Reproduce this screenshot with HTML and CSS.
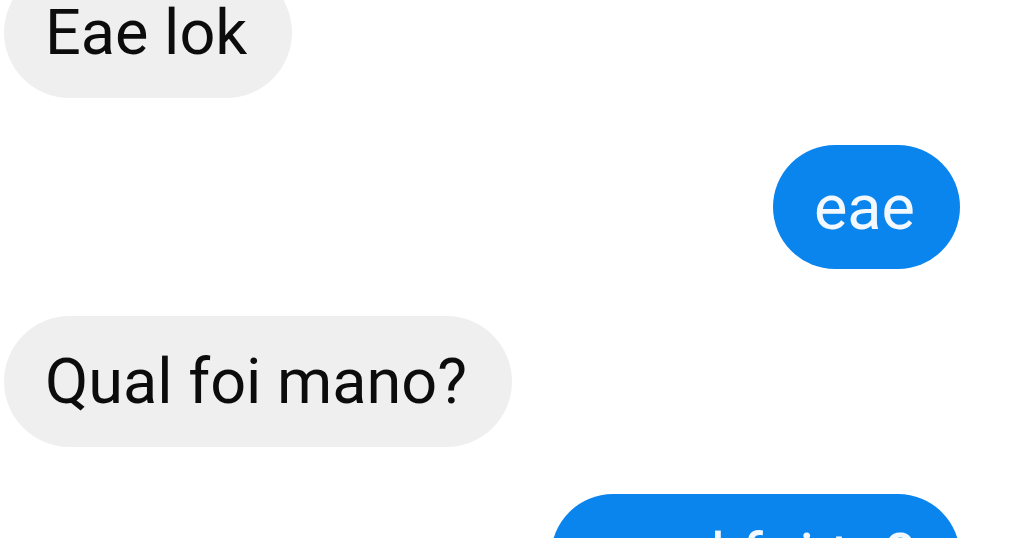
FILE: index.html
```html
<!DOCTYPE html>
<html lang="pt">
<head>
<meta charset="utf-8">
<link rel="stylesheet" href="styles.css">
<title>Chat</title>
</head>
<body>
<div class="chat">
  <div class="msg in">Eae lok</div>
  <div class="msg out">eae</div>
  <div class="msg in">Qual foi mano?</div>
  <div class="msg out last">qual foi tu?</div>
</div>
</body>
</html>
```
FILE: styles.css
```css
html, body {
  margin: 0;
  padding: 0;
  background: #ffffff;
  overflow: hidden;
}
.chat {
  display: flex;
  flex-direction: column;
  gap: 47px;
  margin-top: -33px;
  padding: 0 64px 0 4px;
  font-family: Roboto, "Noto Sans", sans-serif;
  font-size: 63px;
}
.msg {
  box-sizing: border-box;
  display: flex;
  align-items: center;
  padding: 0 45px 0 41px;
  border-radius: 66px;
  line-height: 1;
}
.in {
  align-self: flex-start;
  height: 131px;
  background: #efefef;
  color: #0c0c0c;
}
.out {
  align-self: flex-end;
  height: 124px;
  background: #0b85ee;
  color: #f2f8fd;
}
.last {
  padding: 0 45px 0 54px;
}
```
